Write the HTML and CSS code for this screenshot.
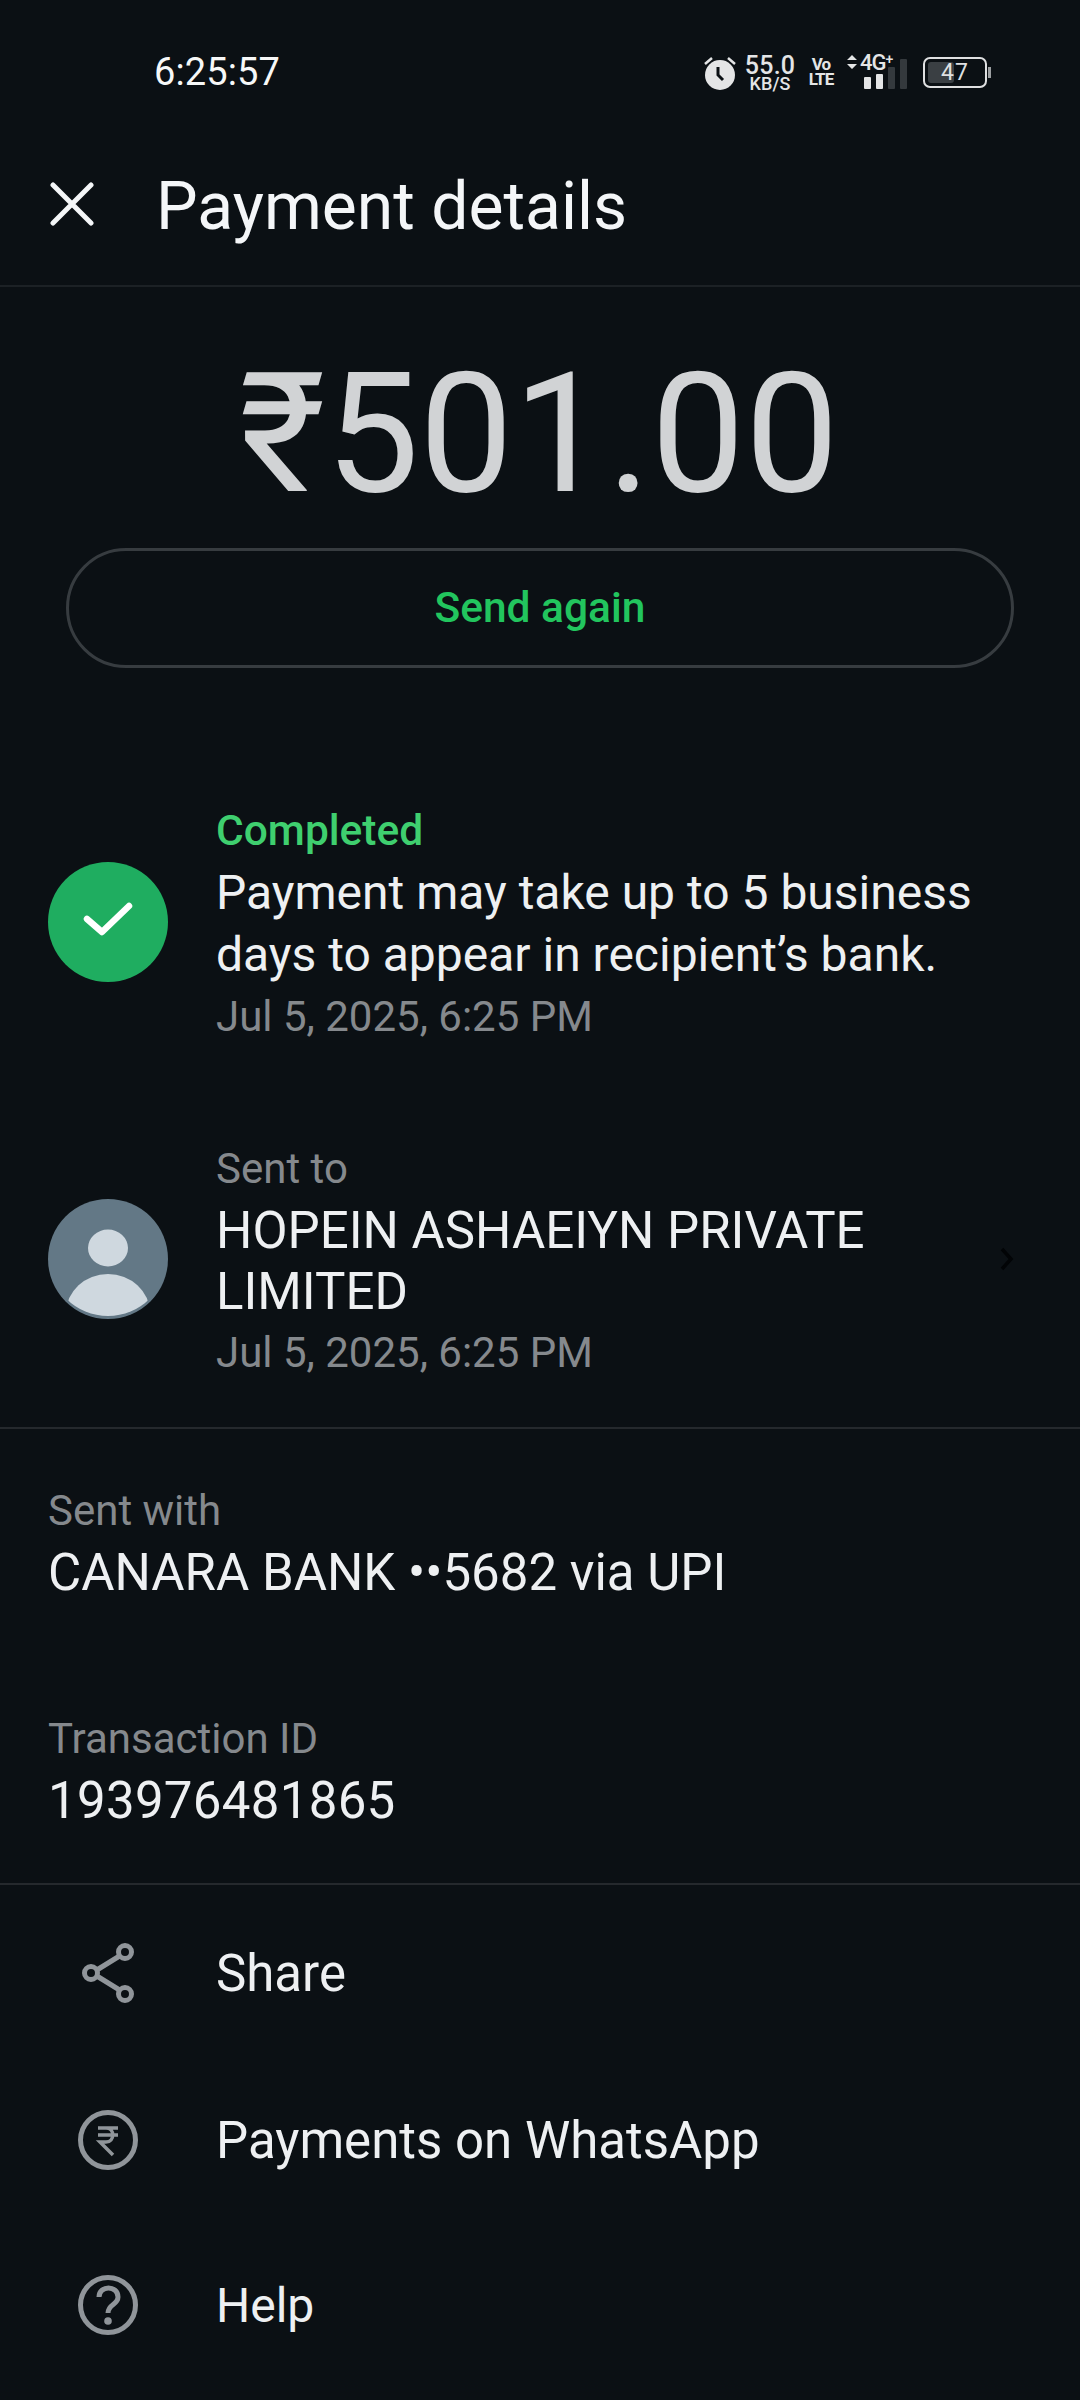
FILE: index.html
```html
<!DOCTYPE html>
<html lang="en">
<head>
  <meta charset="UTF-8" />
  <meta name="viewport" content="width=device-width, initial-scale=1.0" />
  <title>Payment details</title>
  <link rel="stylesheet" href="styles.css">
</head>
<body>
  <div class="status-bar">
    <span class="clock">6:25:57</span>
    <div class="status-icons">
      <svg class="alarm" width="32" height="36" viewBox="0 0 32 36">
        <path d="M1 10 L8 4 M31 10 L24 4" stroke="#e4e5e6" stroke-width="2.5" fill="none" />
        <circle cx="16" cy="21" r="15" fill="#e4e5e6" />
        <path d="M14 13 V21 L19 26" stroke="#0b1014" stroke-width="3" fill="none" />
      </svg>
      <div class="speed"><span class="speed-num">55.0</span><span class="speed-unit">KB/S</span></div>
      <div class="volte"><span>Vo</span><span>LTE</span></div>
      <div class="network">
        <svg width="10" height="14" viewBox="0 0 10 14">
          <path d="M5 0 L10 5 H0 Z M0 9 H10 L5 14 Z" fill="#e4e5e6" />
        </svg>
        <span class="net-label">4G<sup>+</sup></span>
        <div class="bars">
          <i class="bar on b1"></i><i class="bar on b2"></i><i class="bar b3"></i><i class="bar b4"></i>
        </div>
      </div>
      <div class="battery"><div class="battery-body"><div class="battery-fill"></div><span>47</span></div><div class="battery-nub"></div></div>
    </div>
  </div>

  <header class="app-header">
    <svg class="close" width="44" height="44" viewBox="0 0 44 44">
      <path d="M3 3 L41 41 M41 3 L3 41" stroke="#f4f6f8" stroke-width="5" stroke-linecap="round" fill="none" />
    </svg>
    <h1 class="title">Payment details</h1>
  </header>

  <section class="summary">
    <div class="amount">₹501.00</div>
    <button class="send-again">Send again</button>
  </section>

  <section class="timeline">
    <div class="row">
      <div class="row-icon">
        <svg width="120" height="120" viewBox="0 0 120 120">
          <circle cx="60" cy="60" r="60" fill="#1fad60" />
          <path d="M39 57 L54 70 L81 44" stroke="#fff" stroke-width="6.5" stroke-linecap="round" stroke-linejoin="round" fill="none" />
        </svg>
      </div>
      <div class="row-text">
        <div class="status-done">Completed</div>
        <div class="main-text para">Payment may take up to 5 business days to appear in recipient’s bank.</div>
        <div class="sub-text">Jul 5, 2025, 6:25 PM</div>
      </div>
    </div>
    <div class="row row-to">
      <div class="row-icon">
        <svg width="120" height="120" viewBox="0 0 120 120">
          <defs><clipPath id="avatarClip"><circle cx="60" cy="58" r="59" /></clipPath></defs>
          <circle cx="60" cy="60" r="60" fill="#637886" />
          <ellipse cx="60" cy="49" rx="20" ry="18.5" fill="#cfd8df" />
          <ellipse cx="60" cy="114" rx="42" ry="39" fill="#cfd8df" clip-path="url(#avatarClip)" />
        </svg>
      </div>
      <div class="row-text row-text-to">
        <div class="sub-text">Sent to</div>
        <div class="main-text">HOPEIN ASHAEIYN PRIVATE LIMITED</div>
        <div class="sub-text">Jul 5, 2025, 6:25 PM</div>
      </div>
      <svg class="chevron" width="14" height="24" viewBox="0 0 14 24">
        <path d="M2 2 L11 12 L2 22" stroke="#020406" stroke-width="3.5" fill="none" />
      </svg>
    </div>
  </section>

  <section class="info">
    <div class="info-item">
      <div class="sub-text">Sent with</div>
      <div class="main-text">CANARA BANK ••5682 via UPI</div>
    </div>
    <div class="info-item">
      <div class="sub-text">Transaction ID</div>
      <div class="main-text txn-id">193976481865</div>
    </div>
  </section>

  <section class="actions">
    <div class="action share-action">
      <div class="action-icon">
        <svg width="60" height="60" viewBox="0 0 60 60">
          <path d="M14 30 L48 9 M14 30 L48 51" stroke="#90959a" stroke-width="5" fill="none" />
          <circle cx="13" cy="30" r="6.5" fill="#0b1014" stroke="#90959a" stroke-width="5" />
          <circle cx="47" cy="9" r="6.5" fill="#0b1014" stroke="#90959a" stroke-width="5" />
          <circle cx="47" cy="51" r="6.5" fill="#0b1014" stroke="#90959a" stroke-width="5" />
        </svg>
      </div>
      <span class="main-text">Share</span>
    </div>
    <div class="action whatsapp-action">
      <div class="action-icon">
        <svg width="60" height="60" viewBox="0 0 60 60">
          <circle cx="30" cy="30" r="27.5" fill="none" stroke="#90959a" stroke-width="5" />
          <path d="M20 18 H40 M20 25 H40 M22 18 H28 C37 18 37 32 28 32 H22 L35 45" fill="none" stroke="#90959a" stroke-width="3.5" />
        </svg>
      </div>
      <span class="main-text">Payments on WhatsApp</span>
    </div>
    <div class="action help-action">
      <div class="action-icon">
        <svg width="60" height="60" viewBox="0 0 60 60">
          <circle cx="30" cy="30" r="27.5" fill="none" stroke="#90959a" stroke-width="5" />
          <path d="M21 22 C21 10 40 10 40 22 C40 30 30 29 30 38" fill="none" stroke="#90959a" stroke-width="5" />
          <circle cx="30" cy="46" r="3.8" fill="#90959a" />
        </svg>
      </div>
      <span class="main-text help-text">Help</span>
    </div>
  </section>
</body>
</html>
```

FILE: styles.css
```css
* {
  margin: 0;
  padding: 0;
  box-sizing: border-box;
}
html, body {
  width: 1080px;
  height: 2400px;
  overflow: hidden;
  font-family: Roboto, 'Liberation Sans', sans-serif;
  background-color: #0b1014;
  color: #eef0f2;
}

/* status bar */
.status-bar {
  height: 144px;
  padding: 0 89px 0 154px;
  display: flex;
  justify-content: space-between;
  align-items: center;
}
.clock {
  font-size: 38px;
  font-weight: 400;
  color: #f7f8f8;
  letter-spacing: 0.1px;
}
.status-icons {
  display: flex;
  align-items: center;
  color: #e4e5e6;
}
.speed {
  display: flex;
  flex-direction: column;
  align-items: center;
  width: 50px;
  margin-left: 9px;
  padding-top: 2px;
  font-weight: 500;
}
.speed-num {
  font-size: 25px;
  line-height: 20px;
  letter-spacing: 0.2px;
}
.speed-unit {
  font-size: 18px;
  line-height: 15px;
  letter-spacing: 0.1px;
}
.volte {
  display: flex;
  flex-direction: column;
  align-items: center;
  margin-left: 15px;
  font-size: 17px;
  line-height: 15px;
  font-weight: 700;
  letter-spacing: -1px;
  width: 22px;
}
.network {
  position: relative;
  width: 60px;
  height: 34px;
  margin-left: 15px;
}
.net-label {
  position: absolute;
  left: 13px;
  top: -3px;
  font-size: 22px;
  line-height: 22px;
  font-weight: 500;
  letter-spacing: -1px;
}
.net-label sup {
  font-size: 14px;
  vertical-align: 6px;
  line-height: 0;
}
.network > svg {
  position: absolute;
  left: 0;
  top: 0;
}
.bars {
  position: absolute;
  right: 0;
  bottom: 0;
  display: flex;
  align-items: flex-end;
  gap: 5px;
}
.bar {
  display: block;
  width: 7px;
  border-radius: 1px;
  background-color: #34393d;
}
.bar.on {
  background-color: #e4e5e6;
}
.b1 { height: 12px; }
.b2 { height: 15px; }
.b3 { height: 22px; }
.b4 { height: 30px; }
.battery {
  display: flex;
  align-items: center;
  margin-left: 16px;
}
.battery-body {
  position: relative;
  width: 64px;
  height: 31px;
  border: 2px solid #dfe0e1;
  border-radius: 7px;
  display: flex;
  align-items: center;
  justify-content: center;
}
.battery-fill {
  position: absolute;
  left: 3px;
  top: 3px;
  bottom: 3px;
  width: 26px;
  border-radius: 3px;
  background-color: #3a3f43;
}
.battery-body span {
  position: relative;
  font-size: 23px;
  font-weight: 400;
  color: #dfe0e1;
  letter-spacing: 1px;
}
.battery-nub {
  width: 3px;
  height: 11px;
  margin-left: 1px;
  background-color: #9c9fa1;
}

/* header */
.app-header {
  height: 143px;
  padding: 0 0 21px 50px;
  display: flex;
  align-items: center;
  border-bottom: 2px solid #1c2125;
}
.title {
  margin-left: 62px;
  margin-top: 5px;
  font-size: 66px;
  font-weight: 400;
  color: #f4f6f8;
}

/* amount */
.summary {
  display: flex;
  flex-direction: column;
  align-items: center;
  padding: 52px 66px 0;
}
.amount {
  font-size: 167px;
  line-height: 190px;
  color: #d1d3d5;
  margin-left: -2px;
}
.send-again {
  width: 100%;
  height: 120px;
  margin-top: 19px;
  padding-bottom: 2px;
  border: 3px solid #373c40;
  border-radius: 60px;
  background: none;
  font-family: inherit;
  font-size: 42.5px;
  font-weight: 500;
  color: #22c55e;
}

/* timeline rows */
.timeline {
  padding-top: 132px;
}
.row {
  display: flex;
  align-items: center;
  position: relative;
  padding: 0 48px;
}
.row-to {
  margin-top: 90px;
  padding-bottom: 43px;
  border-bottom: 2px solid #25292d;
}
.row-icon {
  width: 120px;
  height: 120px;
  flex-shrink: 0;
  margin-right: 48px;
  margin-top: -5px;
}
.row-text {
  width: 790px;
}
.row-text-to {
  width: 700px;
}
.status-done {
  font-size: 42.5px;
  line-height: 62px;
  font-weight: 500;
  color: #3fcf6f;
}
.main-text {
  font-size: 51px;
  line-height: 61px;
  color: #eef0f2;
}
.main-text.para {
  font-size: 48px;
  line-height: 62px;
}
.main-text.help-text {
  font-size: 48px;
}
.sub-text {
  font-size: 42px;
  line-height: 62px;
  color: #85898d;
}
.chevron {
  position: absolute;
  right: 66px;
  top: 50%;
  margin-top: -36px;
}

/* sent with, transaction id */
.info {
  padding: 51px 48px 52px;
  border-bottom: 2px solid #25292d;
}
.info-item + .info-item {
  margin-top: 105px;
}
.txn-id {
  letter-spacing: 0.3px;
}

/* bottom actions */
.actions {
  display: flex;
  flex-direction: column;
  padding-top: 5px;
}
.action {
  display: flex;
  align-items: center;
  padding-left: 78px;
  height: 166px;
}
.whatsapp-action {
  padding-top: 2px;
}
.action-icon {
  width: 60px;
  height: 60px;
  margin-right: 78px;
}
```
